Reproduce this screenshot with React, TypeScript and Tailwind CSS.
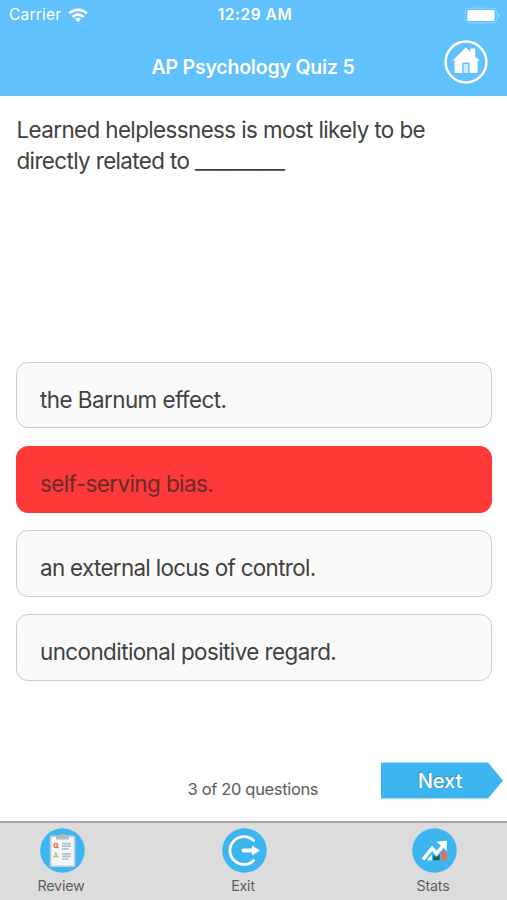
import React from "react";

const answers = [
  { text: "the Barnum effect.", wrong: false, spacing: "tracking-[-0.53px]" },
  { text: "self-serving bias.", wrong: true, spacing: "tracking-[-0.56px]" },
  { text: "an external locus of control.", wrong: false, spacing: "tracking-[-0.67px]" },
  { text: "unconditional positive regard.", wrong: false, spacing: "tracking-[-0.56px]" },
];

function WifiIcon() {
  return (
    <svg width="20" height="15" viewBox="0 0 20 15" fill="none" stroke="#fff" strokeWidth="2.7">
      <path d="M1.2 5.3C6 .6 14 .6 18.8 5.3" />
      <path d="M4.4 9C7.6 5.9 12.4 5.9 15.6 9" />
      <path d="M10 14 6.9 10.9C8.6 9.2 11.4 9.2 13.1 10.9Z" fill="#fff" stroke="none" />
    </svg>
  );
}

function BatteryIcon() {
  return (
    <svg width="37" height="17" viewBox="0 0 37 17">
      <rect x="1.2" y="1.2" width="31.6" height="14.6" rx="4" fill="none" stroke="#fff" strokeOpacity=".3" strokeWidth="1" />
      <rect x="3.4" y="3" width="27.2" height="11" rx="1.5" fill="#fff" />
      <path d="M34.3 6q2.4 2.5 0 5Z" fill="#fff" fillOpacity=".5" />
    </svg>
  );
}

function HomeIcon() {
  return (
    <svg width="44" height="44" viewBox="0 0 44 44">
      <circle cx="22" cy="22" r="20.4" fill="none" stroke="#fff" strokeWidth="2.5" />
      <path
        d="M8.4 20.8 21.8 7.4 26.2 11.8V8.6H31.2V16.4L35.8 20.8H33.6V33H10.6V20.8Z"
        fill="#fff"
      />
      <path d="M18.2 33V22.6H25.6V33Z" fill="#60c1fd" />
      <path d="M19.6 33V24H24.2V33Z" fill="#c9e9fd" />
    </svg>
  );
}

function ReviewIcon() {
  return (
    <svg width="45" height="45" viewBox="0 0 45 45">
      <circle cx="22.5" cy="22.5" r="22.3" fill="#3db5f0" />
      <rect x="9.8" y="7.6" width="25.6" height="31.4" rx="1.5" fill="#c5ced5" />
      <rect x="11.5" y="9.2" width="22.2" height="28.2" fill="#f5f6f7" />
      <path d="M16 7.5H19.5Q20 5.8 22.5 5.8T25.5 7.5H29V11.5H16Z" fill="#b3bbc1" />
      <circle cx="15.8" cy="17.4" r="1.8" fill="none" stroke="#e87553" strokeWidth="1.5" />
      <path d="m16.5 18 2 2" stroke="#e87553" strokeWidth="1.5" />
      <path d="m13.6 30 2.2-5.2L18 30M14.5 28.5H17.2" fill="none" stroke="#a2bd78" strokeWidth="1.1" />
      <path d="M22 15.6H31M22 18.2H31M22 20.8H28.5M22 25.8H31M22 28.4H31M22 31H28.5" stroke="#b6c0ce" strokeWidth="1.7" />
    </svg>
  );
}

function ExitIcon() {
  return (
    <svg width="45" height="45" viewBox="0 0 45 45">
      <circle cx="22.5" cy="22.5" r="22.3" fill="#3db5f0" />
      <path d="M31.6 12.6A13.9 13.9 0 1 0 31.6 32.4" fill="none" stroke="#fff" strokeWidth="2.8" strokeLinecap="round" />
      <path d="M21.5 22.5H31" stroke="#fff" strokeWidth="3.8" strokeLinecap="round" />
      <path d="M30 17.6 37.9 22.5 30 27.4Z" fill="#fff" />
    </svg>
  );
}

function StatsIcon() {
  return (
    <svg width="45" height="45" viewBox="0 0 45 45">
      <circle cx="22.5" cy="22.5" r="22.3" fill="#3db5f0" />
      <path d="M15.5 32.3V31L20 26.8V32.3Z" fill="#fff" />
      <path d="M21.3 32.3V27.5L24.5 29.2 27.6 26V32.3Z" fill="#12664f" />
      <path d="M29.3 32.3V24.4L31.8 21.8 35 26V32.3Z" fill="#ed6969" />
      <path d="m11 31.5 9.2-11.2 4.4 5.2 6.6-8" fill="none" stroke="#fff" strokeWidth="3.5" />
      <path d="M24.4 13.8 34.8 12.5V23Z" fill="#fff" />
    </svg>
  );
}

const tabs = [
  { label: "Review", icon: <ReviewIcon />, margin: "ml-[32px]" },
  { label: "Exit", icon: <ExitIcon />, margin: "ml-[122px]" },
  { label: "Stats", icon: <StatsIcon />, margin: "ml-[130px]" },
];

export default function App() {
  return (
    <div className="flex h-[900px] w-[507px] flex-col overflow-hidden bg-white font-['Inter',sans-serif] text-[#414141]">
      <header className="h-24 shrink-0 bg-[#60c1fd] text-white">
        <div className="grid h-[30px] grid-cols-[1fr_90px_1fr] items-center pl-[9px] pr-[6px]">
          <div className="flex items-center gap-[7px] text-[15.5px]">
            <span className="tracking-[0.2px]">Carrier</span>
            <WifiIcon />
          </div>
          <span className="whitespace-nowrap text-center text-[15.5px] font-semibold tracking-[0.55px]">12:29 AM</span>
          <div className="flex justify-end"><BatteryIcon /></div>
        </div>
        <div className="grid h-[66px] grid-cols-[80px_1fr_80px] items-start">
          <span />
          <h1 className="-ml-px mt-[23px] text-center text-[19.5px] font-semibold leading-7 tracking-[-0.2px]">AP Psychology Quiz 5</h1>
          <button className="ml-[17px] mt-[10px] w-11" aria-label="Home"><HomeIcon /></button>
        </div>
      </header>

      <main className="flex min-h-0 flex-1 flex-col px-[15.5px]">
        <p className="h-[265.5px] shrink-0 pl-px pt-[18px] text-[22.4px] leading-[31px]">
          <span className="block whitespace-nowrap tracking-[-0.6px]">Learned helplessness is most likely to be</span>
          <span className="block whitespace-nowrap tracking-[-0.62px]">directly related to <span className="tracking-[-0.25px]">_________</span></span>
        </p>
        <div className="flex flex-col gap-[17.5px]">
          {answers.map((a) => (
            <button
              key={a.text}
              className={`flex h-[66.8px] items-center rounded-[12px] border-[1.5px] pl-[23.5px] pt-[9px] text-left text-[22.4px] ${
                a.wrong ? "border-[#ff3838] bg-[#ff3838] text-[#692c2c]" : "border-[#cbcbcb] bg-[#fafafa]"
              }`}
            >
              <span className={a.spacing}>{a.text}</span>
            </button>
          ))}
        </div>
        <div className="mt-auto flex h-[60px] items-start">
          <span className="ml-[172px] mt-[16px] text-[16.5px] leading-6 tracking-[-0.34px] text-[#5b5b5b]">3 of 20 questions</span>
        </div>
      </main>

      <button className="absolute left-[381px] top-[762px] h-[37px] w-[122px] text-white">
        <svg className="absolute inset-0" width="122" height="37" viewBox="0 0 122 37">
          <path d="M1 .5H107L122 18.5 107 36.5H1Q0 36.5 0 35.5V1.5Q0 .5 1 .5Z" fill="#3db5f0" />
        </svg>
        <span className="relative -left-[2px] text-[20px] font-medium [text-shadow:-1px_-1px_1px_rgba(80,100,115,0.5)]">Next</span>
      </button>

      <nav className="flex h-[79px] shrink-0 border-t-2 border-[#a7a7a7] bg-[#dcdcdc]">
        {tabs.map((t) => (
          <div key={t.label} className={`flex w-[60px] flex-col items-center pt-[5px] ${t.margin}`}>
            {t.icon}
            <span className="-ml-[2px] mt-[3px] text-[14.3px] leading-[20px] tracking-[-0.2px] text-[#5e5e5e]">{t.label}</span>
          </div>
        ))}
      </nav>
    </div>
  );
}
